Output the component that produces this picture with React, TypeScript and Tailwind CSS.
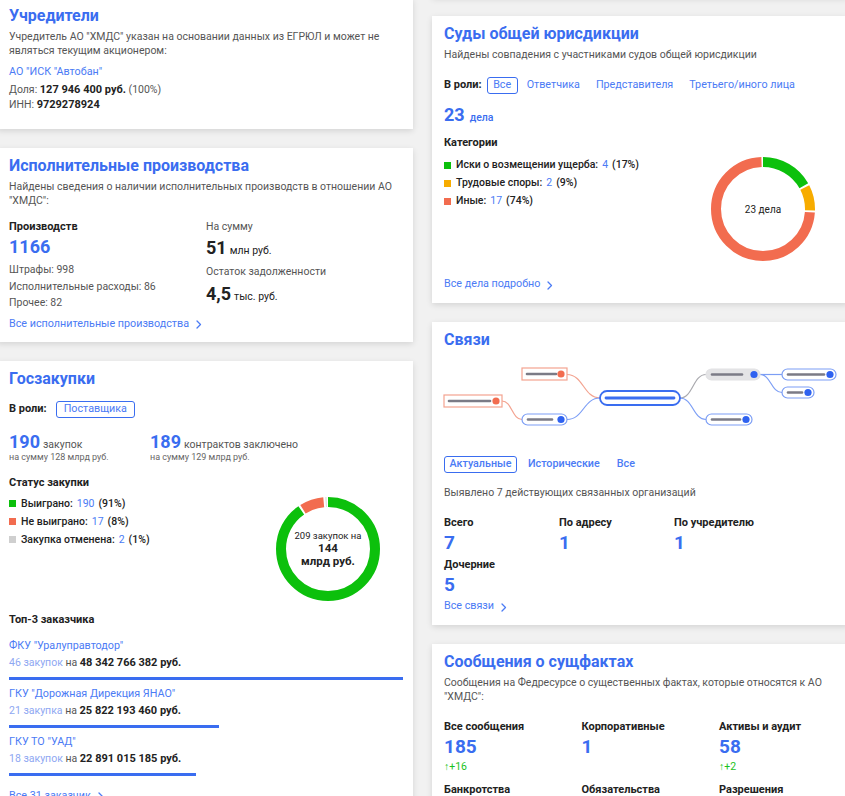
import React from "react";

function Chevron() {
  return (
    <svg width="6" height="9" viewBox="0 0 6 9" className="ml-[7px] mt-[2px]">
      <polyline points="1,1 4.5,4.5 1,8" fill="none" stroke="#4b7bf5" strokeWidth="1.3" strokeLinecap="round" strokeLinejoin="round" />
    </svg>
  );
}

function MoreLink({ text, className = "" }: { text: string; className?: string }) {
  return (
    <div className={`flex items-center h-[16px] text-[10.75px] leading-[16px] text-[#4b7bf5] ${className}`}>
      <span>{text}</span>
      <Chevron />
    </div>
  );
}

function Card({ children, className = "" }: { children: React.ReactNode; className?: string }) {
  return <div className={`bg-white shadow-[0_2px_6px_rgba(0,0,0,0.12)] px-3 ${className}`}>{children}</div>;
}

function Title({ children }: { children: React.ReactNode }) {
  return <div className="text-[16px] leading-[22px] font-bold text-[#3a6df0]">{children}</div>;
}

function Desc({ children, className = "" }: { children: React.ReactNode; className?: string }) {
  return <div className={`text-[10.5px] leading-[14px] text-[#555] ${className}`}>{children}</div>;
}

type Seg = { value: number; color: string };

function Donut({ segs, children }: { segs: Seg[]; children: React.ReactNode }) {
  const r = 47;
  const c = 2 * Math.PI * r;
  const total = segs.reduce((a, s) => a + s.value, 0);
  const gap = 2;
  let acc = 0;
  return (
    <div className="relative w-[104px] h-[104px] shrink-0">
      <svg width="104" height="104" viewBox="0 0 104 104">
        <g transform="rotate(-90 52 52)">
          {segs.map((s, i) => {
            const len = (s.value / total) * c;
            const el = (
              <circle
                key={i}
                cx="52"
                cy="52"
                r={r}
                fill="none"
                stroke={s.color}
                strokeWidth="10"
                strokeDasharray={`${Math.max(len - gap, 0.5)} ${c}`}
                strokeDashoffset={-acc}
              />
            );
            acc += len;
            return el;
          })}
        </g>
      </svg>
      <div className="absolute inset-0 flex flex-col items-center justify-center text-center text-[#222]">{children}</div>
    </div>
  );
}

function LegendItem({ color, label, num, pct }: { color: string; label: string; num: string; pct: string }) {
  return (
    <div className="flex items-center h-[18px] text-[10.5px] leading-[18px] text-[#222]">
      <span className="w-[7px] h-[7px] mr-[5px]" style={{ background: color }} />
      <span className="font-medium">{label}</span>
      <span className="ml-[4px] text-[#4b7bf5]">{num}</span>
      <span className="ml-[4px] font-medium">{pct}</span>
    </div>
  );
}

function Diagram() {
  const red = "#f3a390";
  const redDot = "#f26c4f";
  const blueLine = "#7c9ef5";
  const blueDot = "#2f62f0";
  const gray = "#7b7b86";
  const curve = (x1: number, y1: number, x2: number, y2: number) => {
    const mx = (x1 + x2) / 2;
    return `M${x1},${y1} C${mx},${y1} ${mx},${y2} ${x2},${y2}`;
  };
  const pill = (x: number, y: number, w: number, lineEnd: number, fill = "white") => (
    <g>
      <rect x={x} y={y} width={w} height={11} rx={5.5} fill={fill} stroke={fill === "white" ? blueLine : "#e2e2e4"} strokeWidth="1.2" />
      <line x1={x + 6} y1={y + 5.5} x2={x + lineEnd} y2={y + 5.5} stroke={gray} strokeWidth="2.6" strokeLinecap="round" />
      <circle cx={x + w - 6} cy={y + 5.5} r={3.6} fill={blueDot} />
    </g>
  );
  const box = (x: number, y: number, w: number, lineEnd: number) => (
    <g>
      <rect x={x} y={y} width={w} height={12} fill="white" stroke={red} strokeWidth="1.2" />
      <line x1={x + 5} y1={y + 6} x2={x + lineEnd} y2={y + 6} stroke={gray} strokeWidth="2.6" strokeLinecap="round" />
      <circle cx={x + w - 6} cy={y + 6} r={3.6} fill={redDot} />
    </g>
  );
  return (
    <svg width="416" height="94" viewBox="0 0 416 94" className="-mx-3 block">
      <path d={curve(70, 50, 90, 68.5)} fill="none" stroke={red} strokeWidth="1.2" />
      <path d={curve(135, 23.5, 168, 47)} fill="none" stroke={red} strokeWidth="1.2" />
      <path d={curve(135, 68.5, 168, 47)} fill="none" stroke={blueLine} strokeWidth="1.2" />
      <path d={curve(248, 47, 274, 23.5)} fill="none" stroke="#a9a9ae" strokeWidth="1.2" />
      <path d={curve(248, 47, 274, 68.5)} fill="none" stroke={blueLine} strokeWidth="1.2" />
      <path d={curve(328, 23.5, 350, 23.5)} fill="none" stroke={blueLine} strokeWidth="1.2" />
      <path d={curve(328, 23.5, 350, 41.5)} fill="none" stroke={blueLine} strokeWidth="1.2" />
      {box(12, 44, 58, 46)}
      {box(90, 17, 45, 34)}
      {pill(90, 63, 45, 30)}
      <rect x={168} y={40} width={80} height={14} rx={7} fill="white" stroke="#3a6df0" strokeWidth="1.8" />
      <line x1={174} y1={47} x2={242} y2={47} stroke="#3a6df0" strokeWidth="2.8" strokeLinecap="round" />
      {pill(274, 18, 54, 36, "#e4e4e6")}
      {pill(274, 63, 46, 34)}
      {pill(350, 18, 54, 42)}
      {pill(350, 36, 32, 20)}
    </svg>
  );
}

const buyers = [
  { name: 'ФКУ "Уралуправтодор"', cnt: "46 закупок", sum: "48 342 766 382 руб.", v: 48342766382 },
  { name: 'ГКУ "Дорожная Дирекция ЯНАО"', cnt: "21 закупка", sum: "25 822 193 460 руб.", v: 25822193460 },
  { name: 'ГКУ ТО "УАД"', cnt: "18 закупок", sum: "22 891 015 185 руб.", v: 22891015185 },
];

function Stat({ label, value, delta }: { label: string; value: string; delta?: string }) {
  return (
    <div>
      <div className="text-[11px] leading-[14px] font-bold text-[#222]">{label}</div>
      <div className="mt-[1px] text-[19px] leading-[24px] font-bold text-[#3a6df0]">{value}</div>
      {delta && <div className="mt-[1px] text-[10.5px] leading-[14px] text-[#1cc21c]">↑{delta}</div>}
    </div>
  );
}

function BigNum({ num, unit, numColor, unitClass }: { num: string; unit: string; numColor: string; unitClass: string }) {
  return (
    <div className="flex items-baseline h-[24px]">
      <span className={`text-[18px] leading-[24px] font-bold ${numColor}`}>{num}</span>
      <span className={`leading-[14px] ${unitClass}`}>{unit}</span>
    </div>
  );
}

export default function App() {
  return (
    <div className="w-[845px] h-[796px] overflow-hidden bg-[#f1f1f1] font-['Roboto','Liberation_Sans',sans-serif]">
      <div className="flex gap-[19px] ml-[-3px]">
        {/* LEFT COLUMN */}
        <div className="w-[416px] shrink-0 flex flex-col gap-[19px] mt-[-2px]">
          <Card className="pt-[7px] pb-[17px]">
            <Title>Учредители</Title>
            <Desc className="mt-[3px]">Учредитель АО "ХМДС" указан на основании данных из ЕГРЮЛ и может не являться текущим акционером:</Desc>
            <div className="mt-[6px] text-[10.75px] leading-[16px] text-[#4b7bf5]">АО "ИСК "Автобан"</div>
            <div className="mt-[2px] text-[10.5px] leading-[15px] text-[#555]">
              Доля: <span className="font-bold text-[#222] text-[11px]">127 946 400 руб.</span> (100%)
            </div>
            <div className="text-[10.5px] leading-[15px] text-[#555]">
              ИНН: <span className="font-bold text-[#222] text-[11px]">9729278924</span>
            </div>
          </Card>

          <Card className="pt-[7px] pb-[10px]">
            <Title>Исполнительные производства</Title>
            <Desc className="mt-[3px]">Найдены сведения о наличии исполнительных производств в отношении АО "ХМДС":</Desc>
            <div className="mt-[12px] grid grid-cols-[197px_1fr]">
              <div>
                <div className="text-[11px] leading-[14px] font-bold text-[#222]">Производств</div>
                <div className="mt-[1px] text-[18px] leading-[24px] font-bold text-[#3a6df0]">1166</div>
                <div className="mt-[3px] text-[10.5px] leading-[16.5px] text-[#555]">Штрафы: 998</div>
                <div className="text-[10.5px] leading-[16.5px] text-[#555]">Исполнительные расходы: 86</div>
                <div className="text-[10.5px] leading-[16.5px] text-[#555]">Прочее: 82</div>
              </div>
              <div>
                <div className="text-[10.5px] leading-[14px] text-[#555]">На сумму</div>
                <div className="mt-[2px]">
                  <BigNum num="51" unit="млн руб." numColor="text-[#222]" unitClass="text-[10.5px] ml-[3px] text-[#222]" />
                </div>
                <div className="mt-[5px] text-[10.5px] leading-[14px] text-[#555]">Остаток задолженности</div>
                <div className="mt-[3px]">
                  <BigNum num="4,5" unit="тыс. руб." numColor="text-[#222]" unitClass="text-[10.5px] ml-[3px] text-[#222]" />
                </div>
              </div>
            </div>
            <MoreLink text="Все исполнительные производства" className="mt-[4px]" />
          </Card>

          <Card className="pt-[7px] pb-[20px]">
            <Title>Госзакупки</Title>
            <div className="mt-[11px] flex items-center h-[17px]">
              <span className="text-[11px] font-bold text-[#222]">В роли:</span>
              <span className="ml-[9px] h-[17px] px-[7px] flex items-center border border-[#3a6df0] rounded-[3px] text-[10.75px] text-[#4b7bf5]">Поставщика</span>
            </div>
            <div className="mt-[12px] grid grid-cols-[141px_1fr]">
              <div>
                <BigNum num="190" unit="закупок" numColor="text-[#3a6df0]" unitClass="text-[10.5px] ml-[3px] text-[#555]" />
                <div className="mt-[-3px] text-[9px] leading-[12px] text-[#666]">на сумму 128 млрд руб.</div>
              </div>
              <div>
                <BigNum num="189" unit="контрактов заключено" numColor="text-[#3a6df0]" unitClass="text-[10.5px] ml-[3px] text-[#555]" />
                <div className="mt-[-3px] text-[9px] leading-[12px] text-[#666]">на сумму 129 млрд руб.</div>
              </div>
            </div>
            <div className="mt-[13px] text-[11px] leading-[14px] font-bold text-[#222]">Статус закупки</div>
            <div className="mt-[5px] flex justify-between">
              <div>
                <LegendItem color="#0cc00c" label="Выиграно:" num="190" pct="(91%)" />
                <LegendItem color="#f26c4f" label="Не выиграно:" num="17" pct="(8%)" />
                <LegendItem color="#cfcfcf" label="Закупка отменена:" num="2" pct="(1%)" />
              </div>
              <div className="mt-[2px] mr-[21px]">
                <Donut
                  segs={[
                    { value: 190, color: "#0cc00c" },
                    { value: 17, color: "#f26c4f" },
                    { value: 2, color: "#cfcfcf" },
                  ]}
                >
                  <div className="text-[9.5px] leading-[13px]">209 закупок на</div>
                  <div className="text-[11.5px] leading-[13px] font-bold">144</div>
                  <div className="text-[11.5px] leading-[13px] font-bold">млрд руб.</div>
                </Donut>
              </div>
            </div>
            <div className="mt-[12px] text-[11px] leading-[14px] font-bold text-[#222]">Топ-3 заказчика</div>
            <div className="mt-[11px] flex flex-col gap-[6px]">
              {buyers.map((b) => (
                <div key={b.name}>
                  <div className="text-[10.75px] leading-[16px] text-[#4b7bf5]">{b.name}</div>
                  <div className="mt-[1px] text-[10.5px] leading-[16px] text-[#555]">
                    <span className="text-[#8ea7f2]">{b.cnt}</span> на{" "}
                    <span className="font-bold text-[#222] text-[11px]">{b.sum}</span>
                  </div>
                  <div className="mt-[6px] h-[3px] bg-[#3a6df0]" style={{ width: `${(b.v / buyers[0].v) * 394}px` }} />
                </div>
              ))}
            </div>
            <MoreLink text="Все 31 заказчик" className="mt-[12px]" />
          </Card>
        </div>

        {/* RIGHT COLUMN */}
        <div className="w-[416px] shrink-0 flex flex-col gap-[19px] mt-[-23px]">
          <Card className="h-[20px]">
            <span />
          </Card>

          <Card className="pt-[7px] pb-[11px]">
            <Title>Суды общей юрисдикции</Title>
            <Desc className="mt-[3px]">Найдены совпадения с участниками судов общей юрисдикции</Desc>
            <div className="mt-[15px] flex items-center h-[17px] text-[10.75px]">
              <span className="font-bold text-[#222] text-[11px]">В роли:</span>
              <span className="ml-[5px] h-[17px] w-[31px] flex items-center justify-center border border-[#3a6df0] rounded-[3px] text-[#4b7bf5]">Все</span>
              <span className="ml-[9px] text-[#4b7bf5]">Ответчика</span>
              <span className="ml-[16px] text-[#4b7bf5]">Представителя</span>
              <span className="ml-[16px] text-[#4b7bf5]">Третьего/иного лица</span>
            </div>
            <div className="mt-[9px]">
              <BigNum num="23" unit="дела" numColor="text-[#3a6df0]" unitClass="text-[10.5px] font-medium ml-[5px] text-[#3a6df0]" />
            </div>
            <div className="mt-[9px] text-[11px] leading-[14px] font-bold text-[#222]">Категории</div>
            <div className="mt-[6px] flex justify-between">
              <div>
                <LegendItem color="#0cc00c" label="Иски о возмещении ущерба:" num="4" pct="(17%)" />
                <LegendItem color="#f7ac00" label="Трудовые споры:" num="2" pct="(9%)" />
                <LegendItem color="#f26c4f" label="Иные:" num="17" pct="(74%)" />
              </div>
              <div className="mt-[1px] mr-[21px]">
                <Donut
                  segs={[
                    { value: 4, color: "#0cc00c" },
                    { value: 2, color: "#f7ac00" },
                    { value: 17, color: "#f26c4f" },
                  ]}
                >
                  <div className="text-[10px] leading-[13px]">23 дела</div>
                </Donut>
              </div>
            </div>
            <MoreLink text="Все дела подробно" className="mt-[15px]" />
          </Card>

          <Card className="pt-[7px] pb-[11px]">
            <Title>Связи</Title>
            <Diagram />
            <div className="mt-[11px] flex items-center h-[17px] text-[10.75px] font-medium text-[#4b7bf5]">
              <span className="h-[17px] w-[73px] flex items-center justify-center border border-[#3a6df0] rounded-[3px]">Актуальные</span>
              <span className="ml-[11px]">Исторические</span>
              <span className="ml-[17px]">Все</span>
            </div>
            <Desc className="mt-[13px]">Выявлено 7 действующих связанных организаций</Desc>
            <div className="mt-[16px] grid grid-cols-[115px_115px_115px] gap-y-[3px]">
              <Stat label="Всего" value="7" />
              <Stat label="По адресу" value="1" />
              <Stat label="По учредителю" value="1" />
              <Stat label="Дочерние" value="5" />
            </div>
            <MoreLink text="Все связи" className="mt-[1px]" />
          </Card>

          <Card className="pt-[7px] pb-[20px]">
            <Title>Сообщения о сущфактах</Title>
            <Desc className="mt-[3px]">Сообщения на Федресурсе о существенных фактах, которые относятся к АО "ХМДС":</Desc>
            <div className="mt-[16px] grid grid-cols-[137.5px_137.5px_1fr] gap-y-[9px]">
              <Stat label="Все сообщения" value="185" delta="+16" />
              <Stat label="Корпоративные" value="1" />
              <Stat label="Активы и аудит" value="58" delta="+2" />
              <Stat label="Банкротства" value="3" />
              <Stat label="Обязательства" value="12" />
              <Stat label="Разрешения" value="4" />
            </div>
          </Card>
        </div>
      </div>
    </div>
  );
}
